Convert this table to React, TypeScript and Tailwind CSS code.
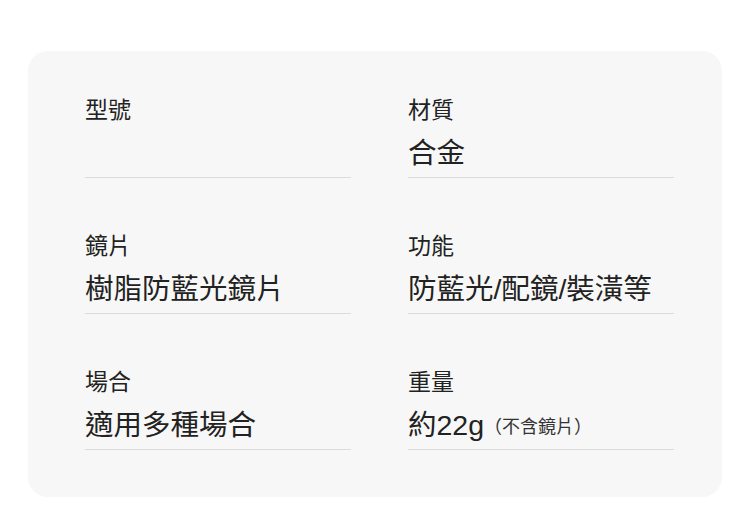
const specs = [
  { label: '型號', value: '' },
  { label: '材質', value: '合金' },
  { label: '鏡片', value: '樹脂防藍光鏡片' },
  { label: '功能', value: '防藍光/配鏡/裝潢等' },
  { label: '場合', value: '適用多種場合' },
  { label: '重量', value: '約22g', note: '（不含鏡片）' },
];

export default function App() {
  return (
    <div
      className="w-[750px] h-[531px] bg-white pt-[51px] pl-[28px]"
      style={{ fontFamily: '"Liberation Sans", "Noto Sans CJK TC", sans-serif' }}
    >
      <div className="w-[694px] h-[446px] rounded-[20px] bg-[#f7f7f7] pt-[44px] pl-[57px]">
        <div className="grid grid-cols-[266px_266px] gap-x-[57px] gap-y-[53px]">
          {specs.map((s) => (
            <div key={s.label}>
              <div className="h-[30px] leading-[30px] text-[23px] text-[#222]">{s.label}</div>
              <div className="mt-[10px] h-[36px] leading-[36px] text-[28.5px] text-[#222] whitespace-nowrap">
                {s.value}
                {s.note && <span className="text-[18px] text-[#333] align-[2px]">{s.note}</span>}
              </div>
              <div className="mt-[6px] h-px bg-[#dcdcdc]" />
            </div>
          ))}
        </div>
      </div>
    </div>
  );
}
